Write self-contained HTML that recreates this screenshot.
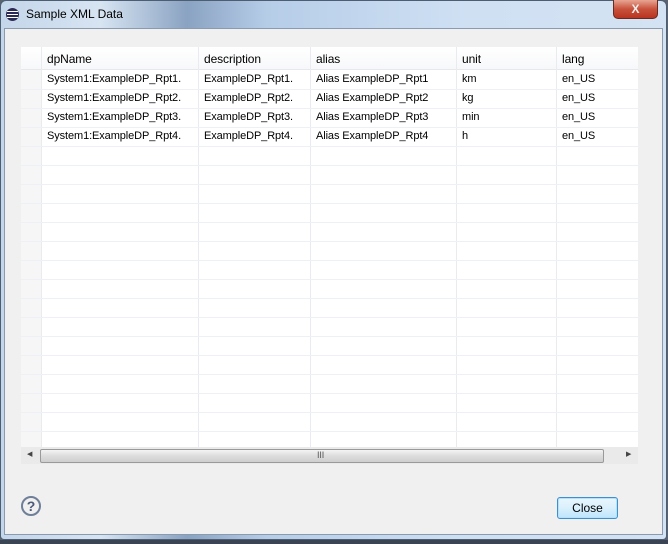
<!DOCTYPE html>
<html><head><meta charset="utf-8"><style>
*{margin:0;padding:0;box-sizing:border-box}
body{width:668px;height:544px;overflow:hidden;font-family:"Liberation Sans",sans-serif;font-size:11px;color:#000;background:#5a6470;position:relative}
.frame{position:absolute;left:0;top:0;width:667px;height:540px;border-radius:6px 6px 4px 4px;background:linear-gradient(90deg,#c4d6ea 0%,#d7e4f2 15%,#8aa3c2 28%,#b6cde8 40%,#cfe0f3 70%,#d4e3f3 100%);border:1px solid #4d5d72}
.title{position:absolute;left:26px;top:7px;font-size:12px;color:#000}
.icon{position:absolute;left:6px;top:8px;width:13px;height:13px;border-radius:50%;background:#2c2a55;overflow:hidden}
.icon i{position:absolute;left:1px;width:11px;height:1px;background:#fff}
.xbtn{position:absolute;left:613px;top:0;width:45px;height:19px;border-radius:0 0 5px 5px;background:linear-gradient(#e8a593,#c8523c 50%,#b8341f);border:1px solid #6b2a20;border-top:none;color:#eee;font-weight:bold;font-size:12px;text-align:center;line-height:18px}
.client{position:absolute;left:4px;top:28px;width:659px;height:507px;background:#f0f0f0;border:1px solid #8a9bb0}
.table{position:absolute;left:21px;top:47px;width:617px;height:416px;background:#fff;overflow:hidden}
.hdr{position:absolute;left:0;top:0;width:617px;height:23px;background:linear-gradient(#fff,#f7f8fa);border-bottom:1px solid #e5e9ee}
.col{position:absolute;top:0;height:400px;border-left:1px solid #e8ecf1}
.rowl{position:absolute;left:0;width:617px;height:1px;background:#edf0f4}
.t{position:absolute;white-space:nowrap;letter-spacing:-0.1px}
.c0{position:absolute;left:0;top:0;width:20px;height:400px;background:#f6f6f6}
.sb{position:absolute;left:21px;top:447px;width:617px;height:17px;background:#eaeaea}
.thumb{position:absolute;left:19px;top:2px;width:564px;height:14px;border:1px solid #9a9a9a;border-radius:2px;background:linear-gradient(#f4f4f4,#dcdcdc 50%,#cfcfcf)}
.help{position:absolute;left:21px;top:496px;width:20px;height:20px;border-radius:50%;border:2px solid #6f7f99;color:#4a5a78;font-weight:bold;font-size:14px;text-align:center;line-height:16px}
.close{position:absolute;left:557px;top:497px;width:61px;height:22px;border:1px solid #3c8fd1;border-radius:3px;background:linear-gradient(#eaf6fd,#d9f0fc 50%,#bee6fd);text-align:center;line-height:20px;box-shadow:inset 0 0 0 1px #b5e1fb;font-size:12px}
.bot{position:absolute;left:0;top:540px;width:668px;height:4px;background:#3b4452}
</style></head><body>
<div class="frame"></div>
<div class="icon"><i style="top:3px"></i><i style="top:6px"></i><i style="top:9px"></i></div>
<div class="title">Sample XML Data</div>
<div class="xbtn">X</div>
<div class="client"></div>
<div class="table">
<div class="c0"></div>
<div class="hdr"></div>
<div class="col" style="left:20px"></div>
<div class="col" style="left:177px"></div>
<div class="col" style="left:289px"></div>
<div class="col" style="left:435px"></div>
<div class="col" style="left:535px"></div>
<div class="t" style="left:26px;top:5px;font-size:12px">dpName</div>
<div class="t" style="left:183px;top:5px;font-size:12px">description</div>
<div class="t" style="left:295px;top:5px;font-size:12px">alias</div>
<div class="t" style="left:441px;top:5px;font-size:12px">unit</div>
<div class="t" style="left:541px;top:5px;font-size:12px">lang</div>
<div class="rowl" style="top:42px"></div><div class="rowl" style="top:61px"></div><div class="rowl" style="top:80px"></div><div class="rowl" style="top:99px"></div><div class="rowl" style="top:118px"></div><div class="rowl" style="top:137px"></div><div class="rowl" style="top:156px"></div><div class="rowl" style="top:175px"></div><div class="rowl" style="top:194px"></div><div class="rowl" style="top:213px"></div><div class="rowl" style="top:232px"></div><div class="rowl" style="top:251px"></div><div class="rowl" style="top:270px"></div><div class="rowl" style="top:289px"></div><div class="rowl" style="top:308px"></div><div class="rowl" style="top:327px"></div><div class="rowl" style="top:346px"></div><div class="rowl" style="top:365px"></div><div class="rowl" style="top:384px"></div>
<div class="t" style="left:26px;top:26px">System1:ExampleDP_Rpt1.</div><div class="t" style="left:183px;top:26px">ExampleDP_Rpt1.</div><div class="t" style="left:295px;top:26px">Alias ExampleDP_Rpt1</div><div class="t" style="left:441px;top:26px">km</div><div class="t" style="left:541px;top:26px">en_US</div>
<div class="t" style="left:26px;top:45px">System1:ExampleDP_Rpt2.</div><div class="t" style="left:183px;top:45px">ExampleDP_Rpt2.</div><div class="t" style="left:295px;top:45px">Alias ExampleDP_Rpt2</div><div class="t" style="left:441px;top:45px">kg</div><div class="t" style="left:541px;top:45px">en_US</div>
<div class="t" style="left:26px;top:64px">System1:ExampleDP_Rpt3.</div><div class="t" style="left:183px;top:64px">ExampleDP_Rpt3.</div><div class="t" style="left:295px;top:64px">Alias ExampleDP_Rpt3</div><div class="t" style="left:441px;top:64px">min</div><div class="t" style="left:541px;top:64px">en_US</div>
<div class="t" style="left:26px;top:83px">System1:ExampleDP_Rpt4.</div><div class="t" style="left:183px;top:83px">ExampleDP_Rpt4.</div><div class="t" style="left:295px;top:83px">Alias ExampleDP_Rpt4</div><div class="t" style="left:441px;top:83px">h</div><div class="t" style="left:541px;top:83px">en_US</div>
</div>
<div class="sb"><div class="t" style="left:6px;top:3px;font-size:7px;color:#444">◀</div><div class="thumb"><div class="t" style="left:276px;top:0;font-size:9px;color:#555">III</div></div><div class="t" style="left:605px;top:3px;font-size:7px;color:#444">▶</div></div>
<div class="help">?</div>
<div class="close">Close</div>
<div class="bot"></div>
</body></html>
